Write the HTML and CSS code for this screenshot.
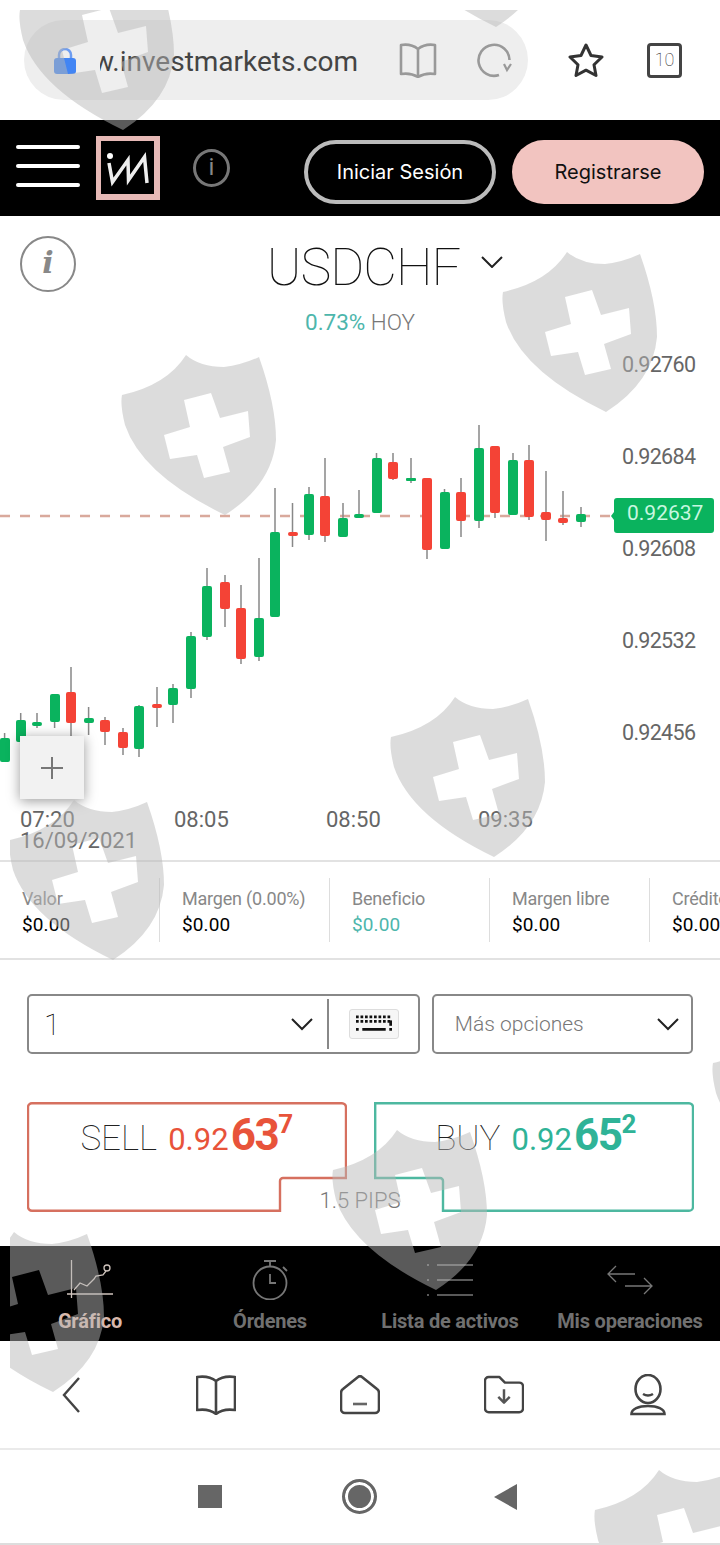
FILE: index.html
```html
<!DOCTYPE html>
<html lang="es">
<head>
  <meta charset="UTF-8" />
  <title>USDCHF</title>
  <link rel="stylesheet" href="styles.css">
</head>
<body>

<div class="page">

  <!-- phone browser top bar -->
  <header class="browser-bar">
    <div class="url-pill">
      <svg class="lock" viewBox="0 0 22 26"><path d="M5 12V7a6 6 0 0 1 12 0v5" fill="none" stroke="#6d9cf0" stroke-width="2.5"/><rect y="10" width="22" height="16" rx="3" fill="#4285f4"/></svg>
      <div class="url"><span>www.investmarkets.com</span></div>
      <svg class="pill-book" viewBox="0 0 38 35" fill="none" stroke="#999" stroke-width="2.6" stroke-linejoin="round"><path d="M19 6C14 2 8 1 2 2v29c6-1 12 0 17 3 5-3 11-4 17-3V2c-6-1-12 0-17 4zM19 6v28"/></svg>
      <svg class="pill-reload" viewBox="0 0 36 36" fill="none" stroke="#999" stroke-width="2.6"><path d="M32.5 18A15.5 15.5 0 1 0 22 33"/><path d="M27 22l3 6 4-6" stroke-width="2.2"/></svg>
    </div>
    <svg class="star" viewBox="0 0 36 34" fill="none" stroke="#333" stroke-width="3" stroke-linejoin="round"><path d="M18 2l5 10.5 11 1.5-8 7.8 2 10.7-10-5.300-10 5.300 2-10.700-8-7.800 11-1.500z"/></svg>
    <div class="tab-count">10</div>
  </header>

  <!-- site nav -->
  <nav class="site-nav">
    <div class="burger"><span></span><span></span><span></span></div>
    <svg class="logo" viewBox="0 0 64 64"><rect width="64" height="64" fill="#e6b9b6"/><rect x="5" y="5" width="53" height="53" fill="#000"/><circle cx="14" cy="20" r="3" fill="#fff"/><path d="M13 27l3.5 19L32 24l.5 20L48.5 21 51 47" fill="none" stroke="#eee" stroke-width="3.5"/></svg>
    <div class="nav-info">i</div>
    <a class="btn-login" href="#">Iniciar Sesión</a>
    <a class="btn-register" href="#">Registrarse</a>
  </nav>

  <!-- chart -->
  <section class="chart">
    <div class="info-round">i</div>
    <div class="symbol">
      <span class="symbol-name">USDCHF</span>
      <svg class="symbol-arrow" viewBox="0 0 22 12" fill="none" stroke="#222" stroke-width="2"><path d="M1 1l10 10L21 1"/></svg>
    </div>
    <div class="change"><span class="teal">0.73%</span> HOY</div>

    <svg class="plot" viewBox="0 336 720 524" width="720" height="524">
      <line class="last-line" x1="0" y1="516" x2="612" y2="516"/>

      <path class="wick" d="M4.6 733V762M20.7 713V745M37 713V728M54.6 694V728M71 667V737M88.6 707V735M105 717V745M123 728V755M139 705V757M157 687V727M173 684V723M191 632V698M207 568V640M225 575V627M241 585V664M259 558V661M275 488V617M292.5 503V547M309 487V540M325 458V542M343 503V537M359 490V518M376.5 453V513M393 453V480M411 458V483M427 478V559M444.5 489V549M461 478V537M479 425V528M495 446V518M513 453V515M529 445V520M546 471V541M563 491V525M581 507V527"/>

      <g class="up">
        <rect x="0" y="738" width="10" height="24" rx="2"/>
        <rect x="16" y="720" width="10" height="22" rx="2"/>
        <rect x="32" y="722" width="10" height="4" rx="2"/>
        <rect x="50" y="694" width="10" height="28" rx="2"/>
        <rect x="84" y="718" width="10" height="5" rx="2"/>
        <rect x="134" y="706" width="10" height="43" rx="2"/>
        <rect x="168" y="688" width="10" height="17" rx="2"/>
        <rect x="186" y="636" width="10" height="53" rx="2"/>
        <rect x="202" y="586" width="10" height="51" rx="2"/>
        <rect x="254" y="618" width="10" height="39" rx="2"/>
        <rect x="270" y="532" width="10" height="85" rx="2"/>
        <rect x="304" y="494" width="10" height="41" rx="2"/>
        <rect x="338" y="518" width="10" height="19" rx="2"/>
        <rect x="354" y="514" width="10" height="4" rx="2"/>
        <rect x="372" y="458" width="10" height="55" rx="2"/>
        <rect x="406" y="478" width="10" height="3" rx="1"/>
        <rect x="440" y="492" width="10" height="57" rx="2"/>
        <rect x="474" y="448" width="10" height="73" rx="2"/>
        <rect x="508" y="460" width="10" height="55" rx="2"/>
        <rect x="576" y="514" width="10" height="8" rx="2"/>
      </g>
      <g class="down">
        <rect x="66" y="692" width="10" height="31" rx="2"/>
        <rect x="100" y="720" width="10" height="12" rx="2"/>
        <rect x="118" y="732" width="10" height="16" rx="2"/>
        <rect x="152" y="704" width="10" height="4" rx="2"/>
        <rect x="220" y="582" width="10" height="27" rx="2"/>
        <rect x="236" y="608" width="10" height="51" rx="2"/>
        <rect x="288" y="532" width="10" height="4" rx="2"/>
        <rect x="320" y="496" width="10" height="40" rx="2"/>
        <rect x="388" y="462" width="10" height="17" rx="2"/>
        <rect x="422" y="478" width="10" height="72" rx="2"/>
        <rect x="456" y="492" width="10" height="29" rx="2"/>
        <rect x="490" y="446" width="10" height="67" rx="2"/>
        <rect x="524" y="460" width="10" height="57" rx="2"/>
        <rect x="541" y="512" width="10" height="8" rx="2"/>
        <rect x="558" y="518" width="10" height="5" rx="2"/>
      </g>

      <path class="price-tag" d="M617 498H711a3 3 0 0 1 3 3V530a3 3 0 0 1-3 3H617a3 3 0 0 1-3-3V520l-3-4 3-4V501a3 3 0 0 1 3-3z"/>
      <text class="price-text" x="627" y="520">0.92637</text>

      <g class="axis-y">
        <text x="622" y="372">0.92760</text>
        <text x="622" y="464">0.92684</text>
        <text x="622" y="556">0.92608</text>
        <text x="622" y="648">0.92532</text>
        <text x="622" y="740">0.92456</text>
      </g>
      <g class="axis-x">
        <text x="20" y="827">07:20</text>
        <text x="20" y="848">16/09/2021</text>
        <text x="174" y="827">08:05</text>
        <text x="326" y="827">08:50</text>
        <text x="478" y="827">09:35</text>
      </g>
    </svg>

    <div class="zoom-btn">
      <svg viewBox="0 0 24 24" width="24" height="24" fill="none" stroke="#777" stroke-width="2"><path d="M12 1v22M1 12h22"/></svg>
    </div>
  </section>

  <!-- account figures -->
  <section class="account">
    <div class="acc-cell acc-first"><div class="acc-label">Valor</div><div class="acc-value">$0.00</div></div>
    <div class="acc-cell acc-wide"><div class="acc-label">Margen (0.00%)</div><div class="acc-value">$0.00</div></div>
    <div class="acc-cell"><div class="acc-label">Beneficio</div><div class="acc-value teal">$0.00</div></div>
    <div class="acc-cell"><div class="acc-label">Margen libre</div><div class="acc-value">$0.00</div></div>
    <div class="acc-cell"><div class="acc-label">Crédito</div><div class="acc-value">$0.00</div></div>
  </section>

  <!-- order form -->
  <section class="order">
    <div class="field field-qty">
      <span class="qty">1</span>
      <svg class="chev" viewBox="0 0 22 13" fill="none" stroke="#222" stroke-width="2"><path d="M1 1l10 10L21 1"/></svg>
      <span class="qty-divider"></span>
      <div class="keyboard">
        <svg viewBox="0 0 40 20" width="40" height="20"><path d="M0 2h40M0 7h40" stroke="#111" stroke-width="3" stroke-dasharray="3 2"/><path d="M0 16h3M7 16h26M37 16h3" stroke="#111" stroke-width="3"/><path d="M38.5 6v6" stroke="#111" stroke-width="3"/></svg>
      </div>
    </div>
    <div class="field field-more">
      <span class="more-text">Más opciones</span>
      <svg class="chev" viewBox="0 0 22 13" fill="none" stroke="#222" stroke-width="2"><path d="M1 1l10 10L21 1"/></svg>
    </div>
  </section>

  <section class="trade">
    <a class="trade-btn sell" href="#">
      <svg class="trade-outline" viewBox="0 0 320 110" fill="none" stroke="#d6705f" stroke-width="2.4"><path d="M5 1.2H315a4 4 0 0 1 4 4V76H256a3 3 0 0 0-3 3V108.8H5a4 4 0 0 1-4-4V5a4 4 0 0 1 4-3.8z"/></svg>
      <span class="side">SELL</span>
      <span class="quote"><span class="q-small">0.92</span><span class="q-big">63</span><sup>7</sup></span>
    </a>
    <a class="trade-btn buy" href="#">
      <svg class="trade-outline" viewBox="0 0 320 110" fill="none" stroke="#4db8a0" stroke-width="2.4"><path d="M1.2 1.2H315a4 4 0 0 1 4 4V105a4 4 0 0 1-4 3.8H69V79a3 3 0 0 0-3-3H1.2z"/></svg>
      <span class="side">BUY</span>
      <span class="quote"><span class="q-small">0.92</span><span class="q-big">65</span><sup>2</sup></span>
    </a>
    <div class="pips">1.5 PIPS</div>
  </section>

  <!-- app tabs -->
  <nav class="tabs">
    <a class="tab active" href="#">
      <svg viewBox="0 0 46 40" fill="none" stroke="#cfc4bd" stroke-width="1.3"><path d="M4.5 0V38M0 34H46"/><path d="M7 30l6-7 7 3 7-7 2-3 7-1 3-4"/><circle cx="40" cy="8" r="3"/></svg>
      <span>Gráfico</span>
    </a>
    <a class="tab" href="#">
      <svg viewBox="0 0 46 40" fill="none" stroke="#777" stroke-width="1.8"><circle cx="23" cy="23" r="16.5"/><path d="M17 1h12M23 1v5M36 7l4 4M23 14v9h6"/></svg>
      <span>Órdenes</span>
    </a>
    <a class="tab" href="#">
      <svg viewBox="0 0 46 40" fill="none" stroke="#777" stroke-width="1.3"><path d="M10 5H46M10 20H46M10 35H46"/><path d="M0 5h2M0 20h2M0 35h2"/></svg>
      <span>Lista de activos</span>
    </a>
    <a class="tab" href="#">
      <svg viewBox="0 0 46 40" fill="none" stroke="#777" stroke-width="1.3"><path d="M28 14H1M9 6l-8 8 8 8M18 26H45M37 18l8 8-8 8"/></svg>
      <span>Mis operaciones</span>
    </a>
  </nav>

  <!-- browser bottom bar -->
  <div class="browser-tools">
    <svg class="tool tool-back" viewBox="0 0 18 36" fill="none" stroke="#444" stroke-width="2.4"><path d="M17 1L2 18l15 17"/></svg>
    <svg class="tool" viewBox="0 0 40 40" fill="none" stroke="#444" stroke-width="2.6" stroke-linejoin="round"><path d="M20 6C15 2 8 1 1 2v33c7-1 14 0 19 4 5-4 12-5 19-4V2c-7-1-14 0-19 4zM20 6v33"/></svg>
    <svg class="tool" viewBox="0 0 40 40" fill="none" stroke="#444" stroke-width="2.6" stroke-linejoin="round"><path d="M18 2L3 14a5 5 0 0 0-2 4v16a4 4 0 0 0 4 4H35a4 4 0 0 0 4-4V18a5 5 0 0 0-2-4L22 2a3 3 0 0 0-4 0z"/><path d="M13 29H27" stroke="#666"/></svg>
    <svg class="tool" viewBox="0 0 42 40" fill="none" stroke="#444" stroke-width="2.6" stroke-linejoin="round"><path d="M1 5a4 4 0 0 1 4-4H16l6 6H37a4 4 0 0 1 4 4V34a4 4 0 0 1-4 4H5a4 4 0 0 1-4-4z"/><path d="M21 14V28M15 22l6 6 6-6" stroke="#555"/></svg>
    <svg class="tool tool-person" viewBox="0 0 36 42" fill="none" stroke="#444" stroke-width="2.6"><ellipse cx="18" cy="15" rx="12.5" ry="14"/><path d="M13 20q5 3 10 0"/><path d="M1.5 40c0-5 7-8 16.5-8s16.500 3 16.500 8z"/></svg>
  </div>

  <!-- android nav -->
  <div class="android-nav">
    <span class="nav-stop"></span>
    <span class="nav-home"></span>
    <span class="nav-back"></span>
  </div>

  <!-- the shield watermark sits over everything -->
  <svg class="watermark" viewBox="10 10 710 1533" width="710" height="1533">
    <defs>
      <path id="shield" fill-rule="evenodd" d="M64 0Q78 12 102 12Q120 10 137 2Q154 50 154 85Q150 130 103 160Q20 120 3 70Q-2 50 0 40Q45 30 64 0ZM62 45L89 38L98 63L126 56L128 82L101 92L108 117L82 123L75 100L48 104L42 80L68 72Z"/>
    </defs>
    <use href="#shield" x="122" y="355"/>
    <use href="#shield" x="503" y="252"/>
    <use href="#shield" x="20" y="-30"/>
    <use href="#shield" x="393" y="-133"/>
    <use href="#shield" x="391" y="697"/>
    <use href="#shield" x="10" y="800"/>
    <use href="#shield" x="333" y="1130"/>
    <use href="#shield" x="-50" y="1232"/>
    <use href="#shield" x="713" y="1023"/>
    <use href="#shield" x="595" y="1470"/>
  </svg>

</div>

</body>
</html>
```

FILE: styles.css
```css
* {
  box-sizing: border-box;
}

body {
  margin: 0;
  font-family: Roboto, "Liberation Sans", sans-serif;
  background: #fff;
}

a {
  text-decoration: none;
  color: inherit;
}

.page {
  position: relative;
  width: 720px;
  height: 1545px;
  overflow: hidden;
}

.teal {
  color: #4db6ac;
}

/* browser bar */
.browser-bar {
  display: flex;
  align-items: center;
  height: 120px;
  padding-left: 24px;
}

.url-pill {
  display: flex;
  align-items: center;
  width: 504px;
  height: 80px;
  padding-left: 30px;
  background: #eee;
  border-radius: 40px;
}

.lock {
  width: 22px;
  height: 26px;
  margin-top: 2px;
}

.url {
  display: flex;
  justify-content: flex-end;
  width: 258px;
  margin-left: 24px;
  padding-top: 3px;
  overflow: hidden;
  font-size: 28px;
  color: #444;
  white-space: nowrap;
}

.pill-book {
  width: 38px;
  height: 35px;
  margin-left: 41px;
}

.pill-reload {
  width: 36px;
  height: 36px;
  margin-left: 40px;
}

.star {
  width: 36px;
  height: 34px;
  margin-left: 40px;
}

.tab-count {
  width: 35px;
  height: 35px;
  margin-left: 43px;
  border: 3px solid #444;
  border-radius: 4px;
  font-size: 18px;
  font-weight: 100;
  line-height: 28px;
  text-align: center;
  color: #222;
}

/* site nav */
.site-nav {
  display: flex;
  align-items: center;
  height: 96px;
  padding-left: 16px;
  background: #000;
}

.burger {
  display: flex;
  flex-direction: column;
  gap: 15px;
  width: 64px;
  margin-top: -4px;
}

.burger span {
  height: 4px;
  background: #fff;
  border-radius: 2px;
}

.logo {
  width: 64px;
  height: 64px;
  margin-left: 16px;
}

.nav-info {
  width: 37px;
  height: 38px;
  margin-left: 33px;
  border: 3px solid #777;
  border-radius: 50%;
  font-size: 24px;
  line-height: 31px;
  text-align: center;
  color: #888;
}

.btn-login,
.btn-register {
  width: 192px;
  height: 64px;
  margin-top: 8px;
  border-radius: 32px;
  font-family: Inter, Roboto, sans-serif;
  font-size: 20px;
  line-height: 64px;
  text-align: center;
}

.btn-login {
  margin-left: 74px;
  border: 4px solid #bbb;
  line-height: 56px;
  color: #fff;
}

.btn-register {
  margin-left: 16px;
  background: #f2c4c0;
  color: #111;
}

/* chart */
.chart {
  position: relative;
  height: 646px;
  border-bottom: 2px solid #e2e2e2;
}

.info-round {
  position: absolute;
  left: 20px;
  top: 20px;
  width: 56px;
  height: 56px;
  border: 2px solid #888;
  border-radius: 50%;
  font-family: "DejaVu Serif", serif;
  font-size: 30px;
  font-style: italic;
  font-weight: bold;
  line-height: 50px;
  text-align: center;
  color: #888;
}

.symbol {
  display: flex;
  align-items: center;
  justify-content: center;
  height: 86px;
  padding-left: 50px;
  padding-top: 16px;
}

.symbol-name {
  font-size: 52px;
  font-weight: 100;
  letter-spacing: -1px;
  color: #111;
}

.symbol-arrow {
  width: 22px;
  height: 12px;
  margin-left: 21px;
  margin-top: -10px;
}

.change {
  height: 34px;
  font-size: 22.5px;
  font-weight: 300;
  line-height: 41px;
  text-align: center;
  color: #777;
}

.change .teal {
  font-weight: 400;
}

.plot {
  display: block;
}

.last-line {
  stroke: #d9a99c;
  stroke-width: 2.5;
  stroke-dasharray: 10 10;
}

.wick {
  stroke: #888;
  stroke-width: 1.5;
  fill: none;
}

.up rect {
  fill: #0ab35e;
}

.down rect {
  fill: #f44336;
}

.price-tag {
  fill: #0ab35e;
}

.price-text {
  font-size: 21px;
  fill: #c8f7e0;
}

.axis-y text {
  font-size: 21.5px;
  letter-spacing: -0.7px;
  fill: #666;
}

.axis-x text {
  font-size: 22px;
  fill: #666;
}

.zoom-btn {
  position: absolute;
  left: 20px;
  top: 520px;
  display: flex;
  align-items: center;
  justify-content: center;
  width: 64px;
  height: 63px;
  background: #f2f2f2;
  box-shadow: 0 2px 12px rgba(0, 0, 0, 0.4);
}

/* account row */
.account {
  display: flex;
  align-items: center;
  height: 98px;
  border-bottom: 2px solid #e2e2e2;
  overflow: hidden;
}

.acc-cell {
  flex: 0 0 160px;
  height: 64px;
  padding-left: 22px;
  border-right: 1px solid #ddd;
  white-space: nowrap;
}

.acc-wide {
  flex-basis: 170px;
}

.acc-label {
  font-size: 18px;
  line-height: 26px;
  margin-top: 8px;
  letter-spacing: -0.2px;
  color: #888;
}

.acc-value {
  font-size: 19px;
  line-height: 26px;
  letter-spacing: 0.1px;
}

/* order form */
.order {
  display: flex;
  gap: 12px;
  padding: 34px 27px 0;
}

.field {
  display: flex;
  align-items: center;
  height: 60px;
  border: 2px solid #888;
  border-radius: 5px;
}

.field-qty {
  width: 394px;
  padding-left: 15px;
}

.field-more {
  width: 262px;
  padding-left: 21px;
}

.qty {
  font-size: 30px;
  font-weight: 100;
  color: #000;
}

.chev {
  width: 22px;
  height: 13px;
  flex: none;
}

.field-qty .chev {
  margin-left: 231px;
}

.qty-divider {
  width: 2px;
  height: 50px;
  margin-left: 14px;
  background: #888;
}

.keyboard {
  display: flex;
  align-items: center;
  justify-content: center;
  width: 50px;
  height: 30px;
  margin-left: 20px;
  background: #f6f6f6;
  border: 1px solid #ddd;
  border-radius: 3px;
}

.keyboard svg {
  width: 36px;
  height: 20px;
}

.more-text {
  width: 202px;
  font-size: 21px;
  font-weight: 300;
  color: #777;
}

/* sell / buy */
.trade {
  position: relative;
  display: flex;
  gap: 27px;
  padding: 48px 27px 0;
  height: 192px;
}

.trade-btn {
  position: relative;
  display: flex;
  align-items: baseline;
  justify-content: center;
  gap: 11px;
  width: 320px;
  height: 110px;
  padding-top: 7px;
}

.buy {
  padding-left: 5px;
}

.trade-outline {
  position: absolute;
  left: 0;
  top: 0;
  width: 320px;
  height: 110px;
}

.side {
  font-size: 35px;
  font-weight: 100;
  color: #222;
}

.quote {
  white-space: nowrap;
}

.sell .quote {
  color: #e8533a;
}

.buy .quote {
  color: #2fb397;
}

.q-small {
  font-size: 31px;
  font-weight: 400;
}

.q-big {
  font-size: 44px;
  font-weight: 700;
  letter-spacing: -1.5px;
  margin-left: 2px;
}

.quote sup {
  font-size: 26px;
  font-weight: 700;
  line-height: 0;
  vertical-align: 17px;
}

.pips {
  position: absolute;
  left: 0;
  right: 0;
  top: 134px;
  font-size: 22px;
  font-weight: 300;
  text-align: center;
  color: #777;
}

/* tabs */
.tabs {
  display: grid;
  grid-template-columns: repeat(4, 180px);
  height: 95px;
  background: #000;
}

.tab {
  display: flex;
  flex-direction: column;
  align-items: center;
  padding-top: 14px;
  font-size: 20px;
  font-weight: 700;
  letter-spacing: -0.2px;
  color: #707070;
  white-space: nowrap;
}

.tab svg {
  width: 46px;
  height: 40px;
  margin-bottom: 9px;
}

.tab.active {
  color: #d8b8ac;
}

/* browser tools */
.browser-tools {
  display: grid;
  grid-template-columns: repeat(5, 144px);
  align-items: center;
  justify-items: center;
  height: 109px;
  border-bottom: 2px solid #eaeaea;
}

.tool {
  width: 40px;
  height: 40px;
}

.tool-back {
  width: 18px;
  height: 36px;
  margin-right: 3px;
}

.tool-person {
  width: 36px;
  height: 42px;
}

/* android */
.android-nav {
  height: 95px;
  border-bottom: 2px solid #ddd;
  display: flex;
  align-items: center;
  padding-left: 198px;
}

.nav-stop {
  width: 24px;
  height: 23px;
  background: #666;
}

.nav-home {
  width: 35px;
  height: 35px;
  margin-left: 120px;
  border: 3px solid #666;
  border-radius: 50%;
  background: #666;
  box-shadow: inset 0 0 0 3px #fff;
}

.nav-back {
  width: 0;
  height: 0;
  margin-left: 117px;
  border-top: 13px solid transparent;
  border-bottom: 13px solid transparent;
  border-right: 23px solid #666;
}

/* watermark */
.watermark {
  position: absolute;
  left: 10px;
  top: 10px;
  fill: rgba(183, 183, 183, 0.49);
  pointer-events: none;
}
```
